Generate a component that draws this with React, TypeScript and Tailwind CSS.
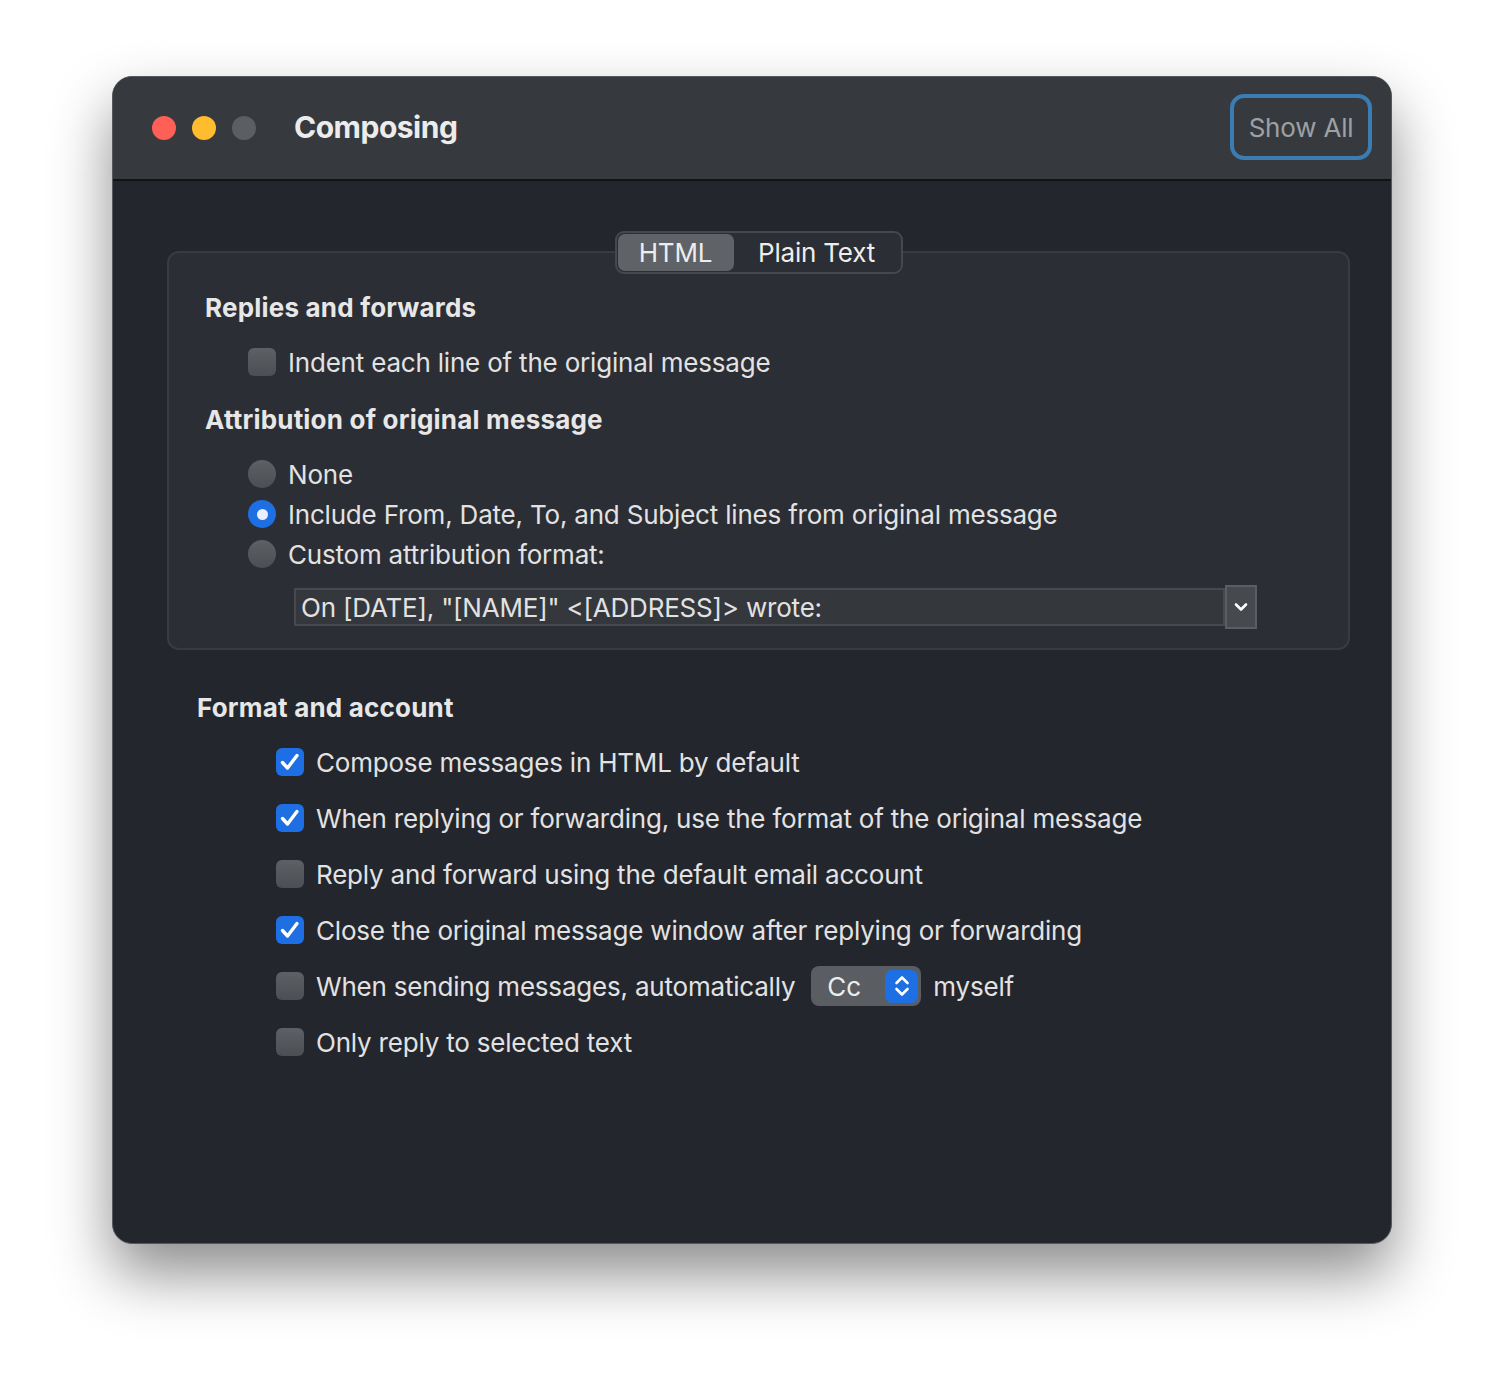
import React from 'react';

const font = { fontFamily: 'Inter, "Noto Sans", sans-serif' };

function Checkbox({ checked }: { checked?: boolean }) {
    if (checked) {
        return (
            <div className="w-[28px] h-[28px] rounded-[6px] bg-[#1d6fe3] flex items-center justify-center shrink-0">
                <svg width="28" height="28" viewBox="0 0 28 28" fill="none">
                    <path d="M6.5 14.5 L11.5 20 L21 7.5" stroke="white" strokeWidth="3.4" strokeLinecap="round" strokeLinejoin="round" />
                </svg>
            </div>
        );
    }
    return <div className="w-[28px] h-[28px] rounded-[6px] bg-gradient-to-b from-[#5d6065] to-[#4b4e53] shrink-0" />;
}

function Radio({ checked }: { checked?: boolean }) {
    if (checked) {
        return (
            <div className="w-[28px] h-[28px] rounded-full bg-[#1d6fe3] flex items-center justify-center shrink-0">
                <div className="w-[11px] h-[11px] rounded-full bg-[#e9f0fb]" />
            </div>
        );
    }
    return <div className="w-[28px] h-[28px] rounded-full bg-gradient-to-b from-[#5d6065] to-[#4b4e53] shrink-0" />;
}

const formatRows = [
    { label: 'Compose messages in HTML by default', checked: true },
    { label: 'When replying or forwarding, use the format of the original message', checked: true },
    { label: 'Reply and forward using the default email account', checked: false },
    { label: 'Close the original message window after replying or forwarding', checked: true },
];

export default function App() {
    return (
        <div className="w-[1504px] h-[1392px] bg-white pt-[76px] pl-[112px]" style={font}>
            <div className="w-[1280px] h-[1168px] rounded-[20px] overflow-hidden bg-[#23262d] border border-[#56595d] shadow-[0_30px_60px_rgba(0,0,0,0.45)] flex flex-col">
                {/* title bar */}
                <div className="h-[104px] shrink-0 bg-[#363a3e] border-b-2 border-[#111315] flex items-center pl-[39px] pr-[19px]">
                    <div className="flex gap-[16px]">
                        <div className="w-[24px] h-[24px] rounded-full bg-[#fe5f57]" />
                        <div className="w-[24px] h-[24px] rounded-full bg-[#febc2e]" />
                        <div className="w-[24px] h-[24px] rounded-full bg-[#5b5e62]" />
                    </div>
                    <div className="ml-[38px] mt-[-2px] text-[30px] font-bold text-[#ececec] tracking-[-0.5px]">Composing</div>
                    <div className="ml-auto mt-[-2px] w-[142px] h-[66px] rounded-[14px] border-[4px] border-[#3b7cb3] flex items-center justify-center text-[26px] text-[#9da1a5] tracking-[-0.2px]">
                        Show All
                    </div>
                </div>

                {/* body */}
                <div className="flex-1 text-[26px] text-[#e2e2e3] tracking-[-0.2px]">
                    <div className="relative mt-[70px] ml-[54px] w-[1183px] h-[399px] rounded-[12px] border-2 border-[#383b41] bg-[#2b2e34] pl-[36px] pt-[38px]">
                        <div className="absolute left-1/2 -translate-x-1/2 top-[-22px] w-[288px] h-[43px] rounded-[9px] border-2 border-[#45484d] bg-[#2b2e34] flex items-center p-[1px]">
                            <div className="w-[116px] h-full rounded-[7px] bg-[#5f6267] flex items-center justify-center text-[#ededed]">HTML</div>
                            <div className="flex-1 flex items-center justify-center text-[#ededed]">Plain Text</div>
                        </div>

                        <div className="h-[32px] flex items-center font-bold text-[#e7e7e7] tracking-[0.2px]">Replies and forwards</div>
                        <div className="mt-[23px] h-[32px] flex items-center gap-[12px] pl-[43px]">
                            <Checkbox />
                            <span>Indent each line of the original message</span>
                        </div>
                        <div className="mt-[25px] h-[32px] flex items-center font-bold text-[#e7e7e7] tracking-[0.2px]">Attribution of original message</div>
                        <div className="mt-[23px] pl-[43px] flex flex-col gap-[8px]">
                            <div className="h-[32px] flex items-center gap-[12px]"><Radio /><span>None</span></div>
                            <div className="h-[32px] flex items-center gap-[12px]"><Radio checked /><span>Include From, Date, To, and Subject lines from original message</span></div>
                            <div className="h-[32px] flex items-center gap-[12px]"><Radio /><span>Custom attribution format:</span></div>
                        </div>
                        <div className="mt-[15px] ml-[89px] flex items-center">
                            <div className="w-[931px] h-[38px] bg-[#34373c] border-2 border-[#46494e] flex items-center pl-[5px]">
                                On [DATE], "[NAME]" &lt;[ADDRESS]&gt; wrote:
                            </div>
                            <div className="w-[32px] h-[44px] bg-[#46494e] border-2 border-[#5a5d62] flex items-center justify-center">
                                <svg width="14" height="10" viewBox="0 0 14 10" fill="none">
                                    <path d="M2 2.5 L7 7.5 L12 2.5" stroke="white" strokeWidth="2.6" strokeLinecap="round" strokeLinejoin="round" />
                                </svg>
                            </div>
                        </div>
                    </div>

                    <div className="ml-[84px] mt-[41px]">
                        <div className="h-[32px] flex items-center font-bold text-[#e7e7e7] tracking-[0.2px]">Format and account</div>
                        <div className="mt-[23px] pl-[79px] flex flex-col gap-[24px]">
                            {formatRows.map(r => (
                                <div key={r.label} className="h-[32px] flex items-center gap-[12px]">
                                    <Checkbox checked={r.checked} />
                                    <span>{r.label}</span>
                                </div>
                            ))}
                            <div className="h-[32px] flex items-center gap-[12px]">
                                <Checkbox />
                                <span>When sending messages, automatically</span>
                                <div className="ml-[4px] w-[110px] h-[40px] rounded-[8px] bg-[#5a5d62] flex items-center pl-[16px] pr-[3px]">
                                    <span className="text-[#ededed]">Cc</span>
                                    <div className="ml-auto w-[33px] h-[33px] rounded-[7px] bg-[#1d6fe3] flex items-center justify-center">
                                        <svg width="20" height="28" viewBox="0 0 20 28" fill="none">
                                            <path d="M4.5 11 L10 5.5 L15.5 11" stroke="white" strokeWidth="2.6" strokeLinecap="round" strokeLinejoin="round" />
                                            <path d="M4.5 17 L10 22.5 L15.5 17" stroke="white" strokeWidth="2.6" strokeLinecap="round" strokeLinejoin="round" />
                                        </svg>
                                    </div>
                                </div>
                                <span>myself</span>
                            </div>
                            <div className="h-[32px] flex items-center gap-[12px]">
                                <Checkbox />
                                <span>Only reply to selected text</span>
                            </div>
                        </div>
                    </div>
                </div>
            </div>
        </div>
    );
}
